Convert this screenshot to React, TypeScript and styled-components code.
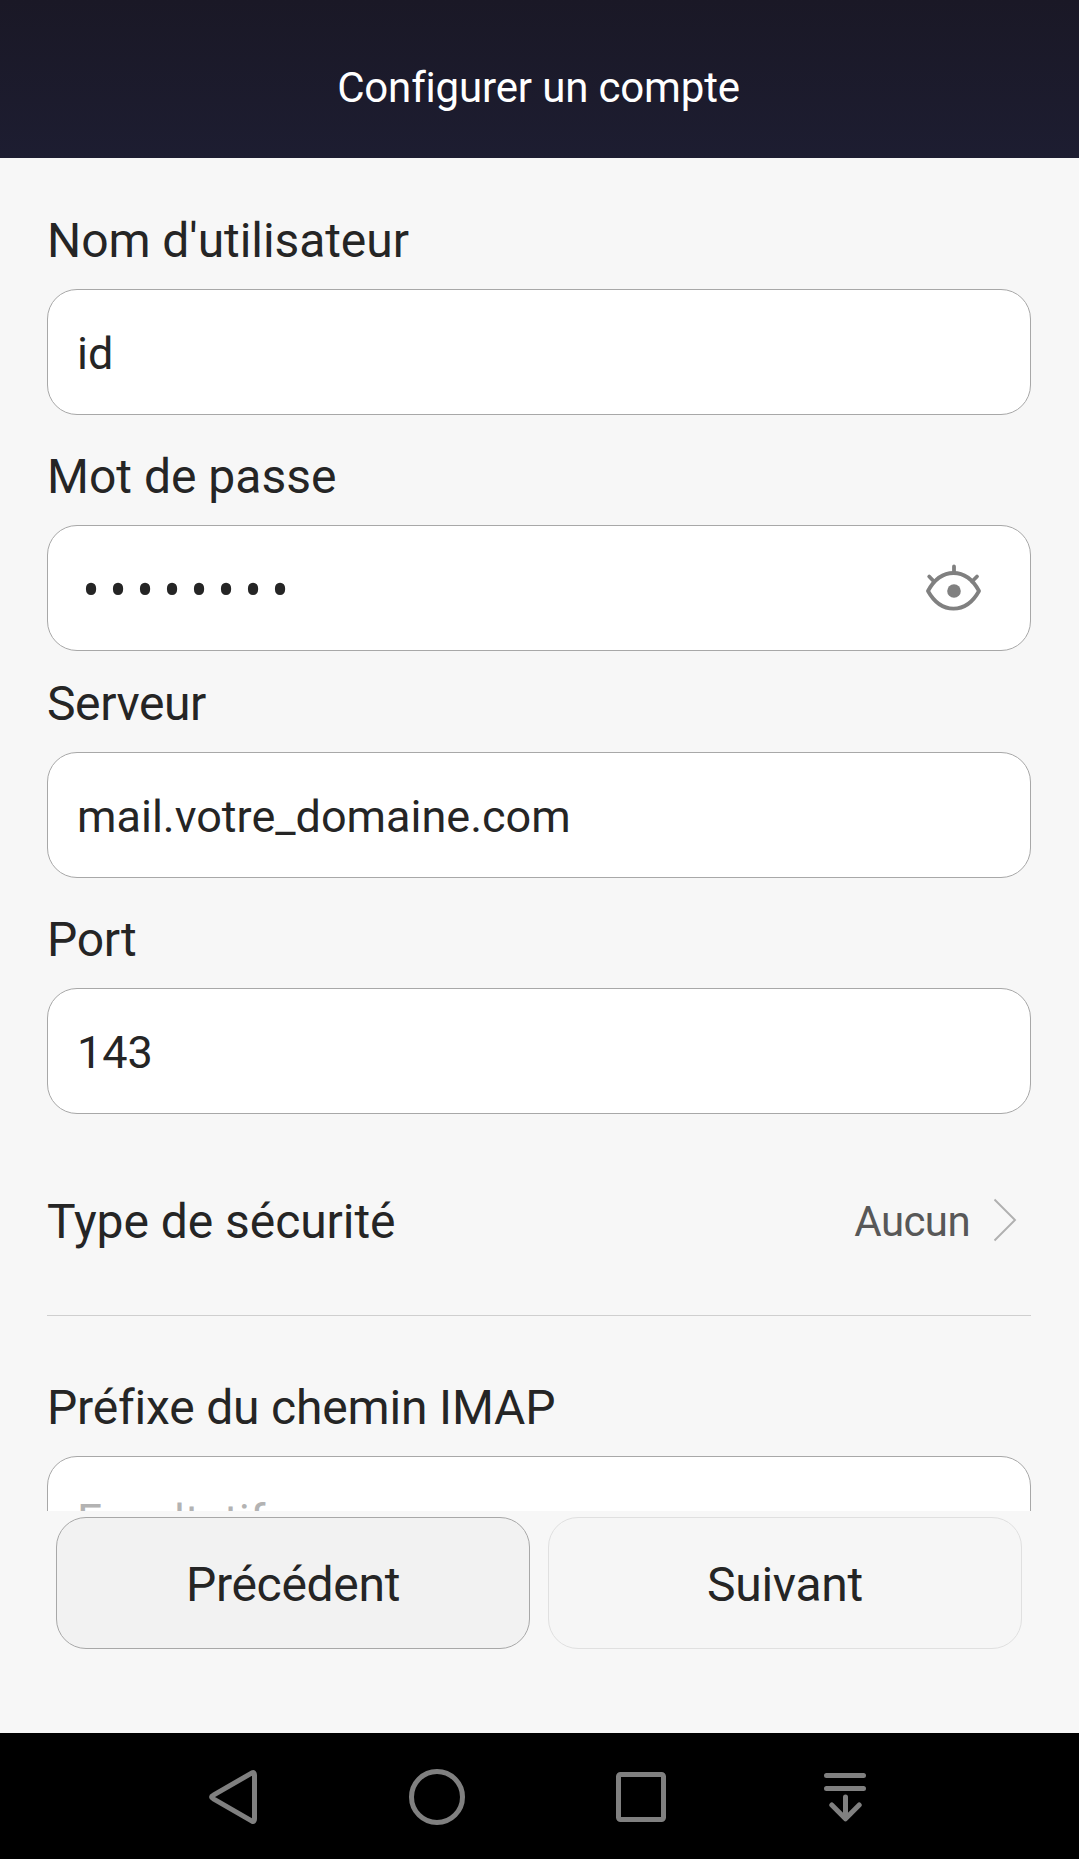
import React from "react";
import styled, { createGlobalStyle } from "styled-components";

const GlobalStyle = createGlobalStyle`
  *, *::before, *::after { box-sizing: border-box; }
  body {
    margin: 0;
    background: #f7f7f7;
    font-family: Roboto, "Noto Sans", "Liberation Sans", sans-serif;
    font-variant-ligatures: none;
    color: #252525;
  }
`;

const Screen = styled.div`
  width: 1079px;
  height: 1859px;
  display: flex;
  flex-direction: column;
  overflow: hidden;
  background: #f7f7f7;
`;

const Header = styled.header`
  flex: none;
  height: 158px;
  padding: 58px 2px 0 0;
  background: linear-gradient(#1a1826, #1d1d31);
  color: #fff;
  text-align: center;
`;

const Title = styled.h1`
  margin: 0;
  font-size: 42px;
  line-height: 60px;
  font-weight: 400;
  letter-spacing: -0.16px;
`;

const Form = styled.main`
  flex: none;
  height: 1353px;
  overflow: hidden;
  padding: 0 48px 0 47px;
`;

const Field = styled.div<{ $gap: number }>`
  display: flex;
  flex-direction: column;
  gap: 20px;
  padding-top: ${(p) => p.$gap}px;
`;

const Label = styled.label<{ $tracking?: number }>`
  font-size: 48px;
  line-height: 56px;
  letter-spacing: ${(p) => p.$tracking ?? 0}px;
`;

const InputBox = styled.div`
  display: flex;
  align-items: center;
  justify-content: space-between;
  height: 126px;
  padding: 0 49px 0 29px;
  border: 1px solid #a8a8a8;
  border-radius: 30px;
  background: #fff;
`;

const Value = styled.span<{ $hint?: boolean }>`
  font-size: 45px;
  line-height: 60px;
  padding-top: 4px;
  color: ${(p) => (p.$hint ? "#b3b3b3" : "#252525")};
`;

const Secret = styled.span`
  margin-top: 5px;
  padding-left: 5.4px;
  font-size: 51px;
  line-height: 60px;
  letter-spacing: 9.8px;
  transform: scaleY(1.14);
`;

const SettingRow = styled.div`
  display: flex;
  align-items: center;
  height: 202px;
  padding: 8px 13px 0 0;
  border-bottom: 1px solid #cfcfcf;
`;

const SettingName = styled.span`
  flex: 1;
  padding-top: 6px;
  font-size: 48px;
  line-height: 56px;
  letter-spacing: -0.05px;
`;

const SettingValue = styled.span`
  padding-top: 6px;
  font-size: 42px;
  line-height: 56px;
  letter-spacing: -0.6px;
  color: #585858;
  margin-right: 22px;
`;

const Actions = styled.div`
  flex: none;
  display: flex;
  gap: 18px;
  height: 222px;
  padding: 6px 57px 0 56px;
`;

const ActionButton = styled.button<{ $muted?: boolean }>`
  flex: 1;
  height: 132px;
  padding: 3px 0 0;
  border: 1px solid ${(p) => (p.$muted ? "#e0e0e0" : "#a8a8a8")};
  border-radius: 30px;
  background: ${(p) => (p.$muted ? "#f6f6f6" : "#f2f2f2")};
  color: #252525;
  font: 400 48px/56px Roboto, "Noto Sans", sans-serif;
  letter-spacing: -0.3px;
`;

const NavBar = styled.nav`
  flex: none;
  display: flex;
  align-items: center;
  height: 126px;
  padding: 2px 0 0 131px;
  background: #000;
`;

const NavItem = styled.div`
  width: 204px;
  display: flex;
  justify-content: center;
`;

const NavGlyph = styled.svg`
  display: block;
  width: 64px;
  height: 64px;
  fill: none;
  stroke: #808080;
  stroke-width: 5;
  stroke-linecap: round;
  stroke-linejoin: round;
`;

const EyeGlyph = styled.svg`
  display: block;
  width: 56px;
  height: 48px;
  margin-bottom: 2px;
  fill: none;
  stroke: #808080;
  stroke-width: 3.8;
  stroke-linecap: round;
`;

const Chevron = styled.svg`
  display: block;
  width: 26px;
  height: 46px;
  margin-top: 3px;
  fill: none;
  stroke: #b0b0b0;
  stroke-width: 1.9;
`;

function Eye() {
  return (
    <EyeGlyph viewBox="0 0 56 48">
      <path d="M3 28C16 4 41 4 54 28C41 51.5 16 51.5 3 28Z" strokeLinejoin="round" />
      <path d="M29 3.5V10M4.2 13.5L9 18.5M52 13.5L47 18.5" />
      <circle cx="29" cy="28" r="6.8" fill="#808080" stroke="none" />
    </EyeGlyph>
  );
}

export default function App() {
  return (
    <>
      <GlobalStyle />
      <Screen>
        <Header>
          <Title>Configurer un compte</Title>
        </Header>
        <Form>
          <Field $gap={55}>
            <Label $tracking={-0.07}>Nom d'utilisateur</Label>
            <InputBox>
              <Value>id</Value>
            </InputBox>
          </Field>
          <Field $gap={34}>
            <Label>Mot de passe</Label>
            <InputBox>
              <Secret>••••••••</Secret>
              <Eye />
            </InputBox>
          </Field>
          <Field $gap={25}>
            <Label $tracking={-0.4}>Serveur</Label>
            <InputBox>
              <Value>mail.votre_domaine.com</Value>
            </InputBox>
          </Field>
          <Field $gap={34}>
            <Label $tracking={-0.25}>Port</Label>
            <InputBox>
              <Value>143</Value>
            </InputBox>
          </Field>
          <SettingRow>
            <SettingName>Type de sécurité</SettingName>
            <SettingValue>Aucun</SettingValue>
            <Chevron viewBox="0 0 26 46">
              <path d="M2.5 2.5L23 23L2.5 43.5" />
            </Chevron>
          </SettingRow>
          <Field $gap={64}>
            <Label $tracking={-0.18}>Préfixe du chemin IMAP</Label>
            <InputBox>
              <Value $hint>Facultatif</Value>
            </InputBox>
          </Field>
        </Form>
        <Actions>
          <ActionButton>Précédent</ActionButton>
          <ActionButton $muted>Suivant</ActionButton>
        </Actions>
        <NavBar>
          <NavItem>
            <NavGlyph viewBox="0 0 64 64">
              <path d="M51 7.9Q53.5 6.8 53.5 10V54Q53.5 57.2 51 56.1L12.4 33.9Q8.7 32 12.4 30.1Z" />
            </NavGlyph>
          </NavItem>
          <NavItem>
            <NavGlyph viewBox="0 0 64 64">
              <circle cx="32" cy="32" r="25.5" />
            </NavGlyph>
          </NavItem>
          <NavItem>
            <NavGlyph viewBox="0 0 64 64">
              <rect x="9.5" y="9.5" width="45" height="45" rx="2" />
            </NavGlyph>
          </NavItem>
          <NavItem>
            <NavGlyph viewBox="0 0 64 64">
              <path d="M13.5 10.5H50.5M13.5 23.5H50.5M32.5 32V53M18.8 40L32.5 53.8L46.2 40" />
            </NavGlyph>
          </NavItem>
        </NavBar>
      </Screen>
    </>
  );
}
